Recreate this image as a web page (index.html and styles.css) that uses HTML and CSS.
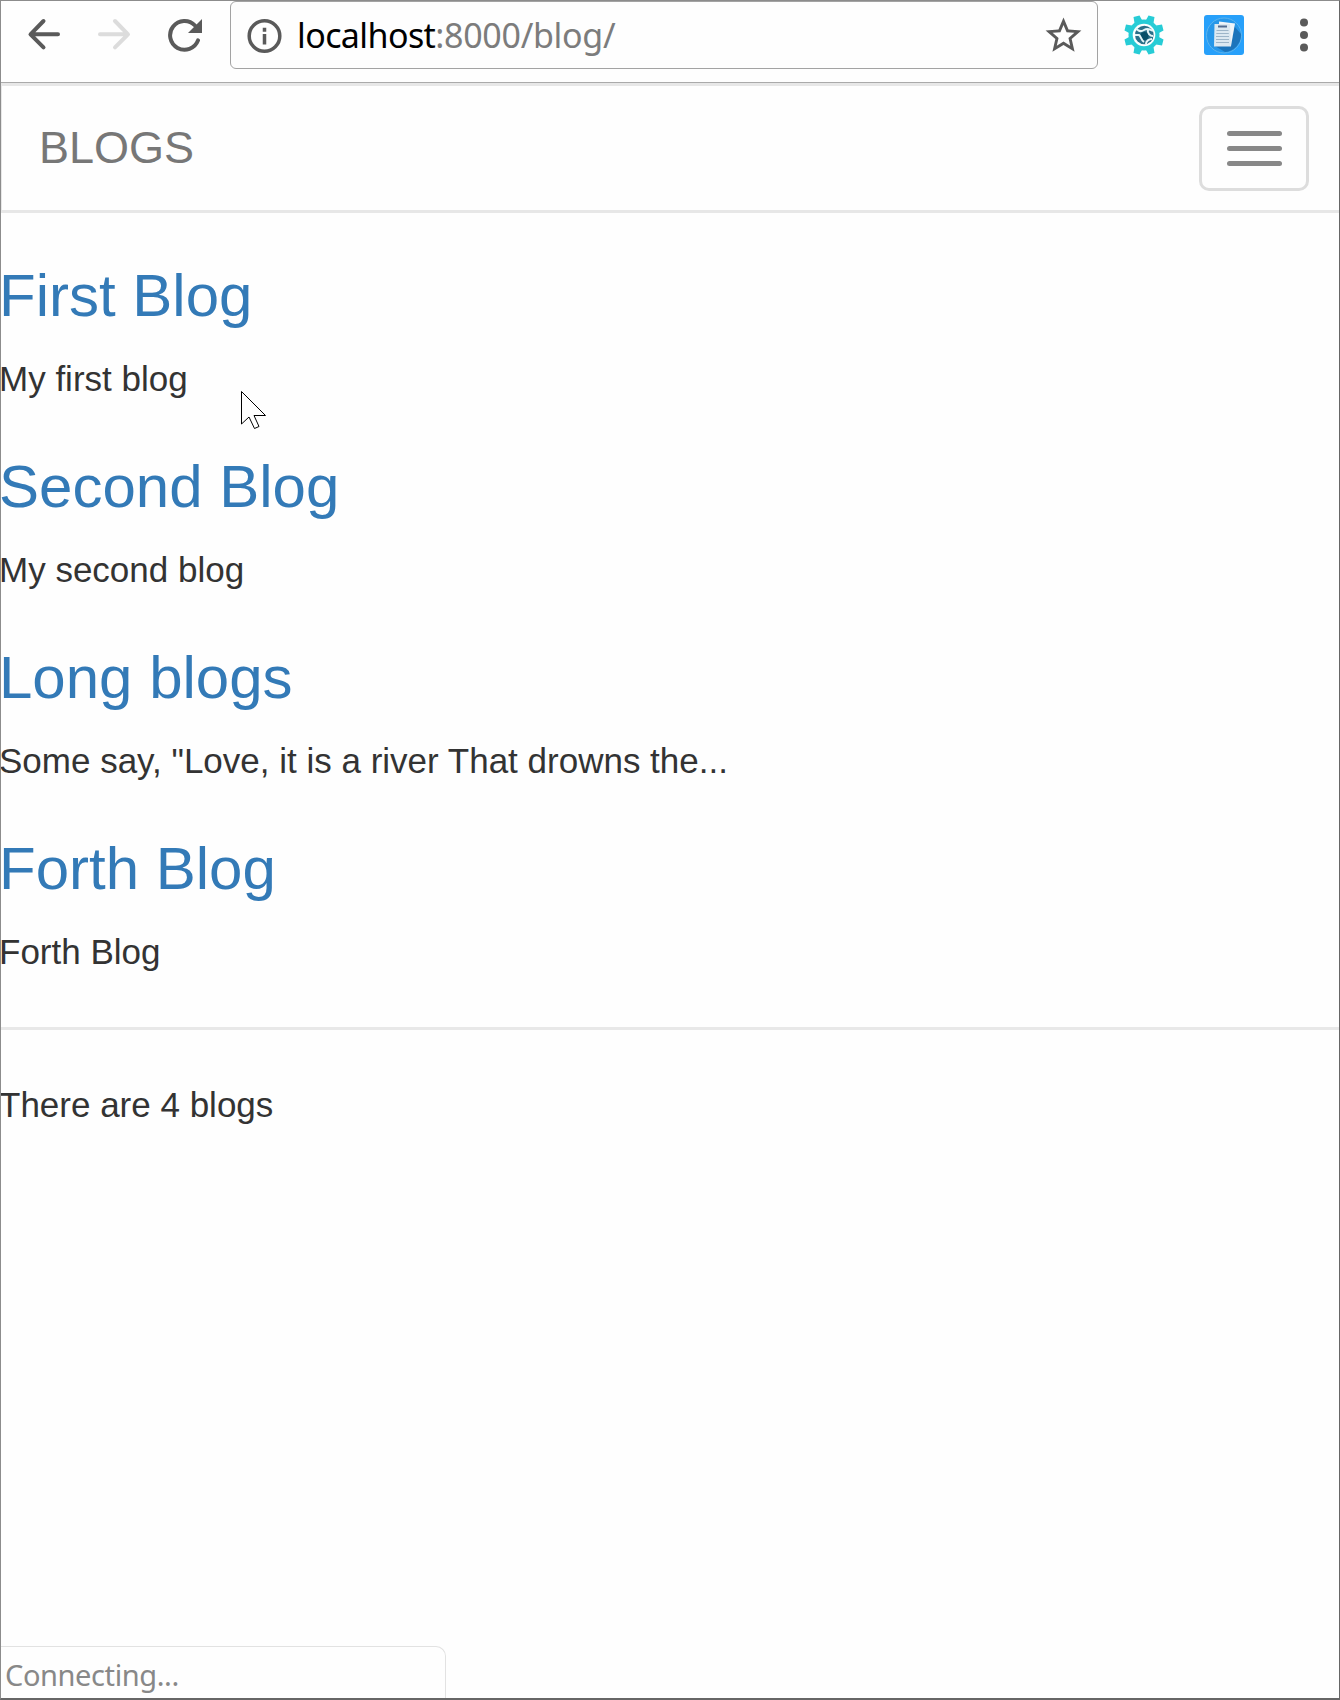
FILE: index.html
```
<!DOCTYPE html>
<html lang="en">
<head>
<meta charset="utf-8">
<title>Blogs</title>
<link rel="stylesheet" href="styles.css">
</head>
<body>
<div class="window">
  <header class="toolbar">
    <svg class="nav-icon" viewBox="0 0 34 34"><path d="M31 17.300H4M16.500 4 3.500 17.300l13 13"/></svg>
    <svg class="nav-icon disabled" viewBox="0 0 34 34"><path d="M3 17.300h27M18 4l13 13.300-13 13"/></svg>
    <svg class="reload" viewBox="0 0 36 34"><path class="arc" d="M28 7.500A14.400 14.400 0 1 0 31 22.400"/><path d="M35 1v14H21z" fill="#5a5a5a"/></svg>
    <div class="omnibox">
      <svg class="info" viewBox="0 0 36 36"><circle cx="17.500" cy="18" r="15.300"/><path d="M17.500 16v10.500M17.500 9.800v3.900"/></svg>
      <div class="url">localhost<span class="path">:8000/blog/</span></div>
      <svg class="star" viewBox="0 0 24 24"><path fill="#5a5a5a" d="M22 9.240l-7.190-.620L12 2 9.190 8.630 2 9.240l5.460 4.730L5.820 21 12 17.270 18.180 21l-1.630-7.030L22 9.240zM12 15.400l-3.760 2.270 1-4.280-3.320-2.880 4.380-.380L12 6.100l1.710 4.040 4.380.380-3.320 2.880 1 4.280L12 15.400z"/></svg>
    </div>
    <svg class="ext" viewBox="0 0 40 40">
      <g fill="#27ccd6">
        <circle cx="20" cy="20" r="15.500"/>
        <g id="teeth"><path d="M10.500 8 9.500 2 15.500 .500l3 5.500zM21.500 6l3-5.500 6 1.500-1 6z"/><path d="M10.500 32l-1 6 6 1.500 3-5.500zM21.500 34l3 5.500 6-1.500-1-6z"/></g>
        <use href="#teeth" transform="rotate(90 20 20)"/>
      </g>
      <circle cx="20" cy="20" r="11.300" fill="#fff"/>
      <circle cx="20.300" cy="20" r="9.300" fill="#2a6f88"/>
      <circle cx="20.500" cy="21" r="4" fill="#074f68"/>
      <path d="M12 13c2 3 5 4 8 2s6-1 9 1M11 20h4c2 1 2 5 5 7M24 15c-1 3 2 6 5 6M22 29c0-3 3-5 6-5" fill="none" stroke="#e6f5f7" stroke-width="2"/>
    </svg>
    <svg class="ext docs" viewBox="0 0 40 40">
      <rect width="40" height="40" rx="3" fill="#27a0fa"/>
      <circle cx="20" cy="20.500" r="17.500" fill="#2797e9" stroke="#5cb4ee"/>
      <path d="M30 11 37 19a17.500 17.500 0 0 1-16 18l-10-6z" fill="#1c74bb"/>
      <path d="m15 6.500 16 2L27 31l-12-1z" fill="#f0f5f9"/>
      <path d="M10.500 9H26l1 22.500H10z" fill="#dce8f1"/>
      <path d="M14 11.500h9" stroke="#536c91" stroke-width="2"/>
      <path d="M12.500 15.500h12M12.300 18.500h12.500M12 21.500h13M12 24.500h13M12 27.500h13" stroke="#9db5c9"/>
    </svg>
    <svg class="menu" viewBox="0 0 8 34"><circle cx="4" cy="4.500" r="4"/><circle cx="4" cy="17" r="4"/><circle cx="4" cy="29.500" r="4"/></svg>
  </header>
  <nav class="navbar">
    <a class="brand">BLOGS</a>
    <button class="toggle" aria-label="Menu"><span></span><span></span><span></span></button>
  </nav>
  <main class="content">
    <h3>First Blog</h3>
    <p>My first blog</p>
    <h3>Second Blog</h3>
    <p>My second blog</p>
    <h3>Long blogs</h3>
    <p>Some say, "Love, it is a river That drowns the...</p>
    <h3>Forth Blog</h3>
    <p>Forth Blog</p>
    <hr>
    <p>There are 4 blogs</p>
  </main>
  <div class="status">Connecting...</div>
</div>
<svg class="cursor" viewBox="0 0 26 40"><path d="M.5.500v32.500l7.500-7 5.500 11.500 4.500-2-5-11H24.500z"/></svg>
</body>
</html>
```
FILE: styles.css
```
* { box-sizing: border-box; }
body { margin: 0; background: #fefefe; }
svg { display: block; flex: none; }
.window {
  height: 1700px;
  display: flex;
  flex-direction: column;
  border: 1px solid #8c8c8c;
  border-right-color: #666;
  border-bottom: 2px solid #666;
  overflow: hidden;
  font-family: "Liberation Sans", Arial, sans-serif;
}
.toolbar {
  height: 82px;
  flex: none;
  display: flex;
  align-items: flex-start;
  padding-left: 26px;
  border-bottom: 1px solid #aaa;
}
.nav-icon {
  width: 34px;
  height: 34px;
  margin: 16px 36px 0 0;
  fill: none;
  stroke: #5a5a5a;
  stroke-width: 4;
  stroke-linecap: round;
  stroke-linejoin: round;
}
.disabled { stroke: #dcdcdc; }
.reload { width: 36px; height: 34px; margin-top: 17px; }
.arc { fill: none; stroke: #5a5a5a; stroke-width: 4; stroke-linecap: round; }
.omnibox {
  width: 868px;
  height: 68px;
  margin-left: 27px;
  display: flex;
  align-items: flex-start;
  border: 1px solid #a3a3a3;
  border-radius: 6px;
}
.info { width: 36px; height: 36px; margin: 16px 0 0 16px; fill: none; stroke: #5a5a5a; stroke-width: 3.5; }
.url {
  flex: 1;
  margin-left: 14px;
  font: 34px/66px "Noto Sans", sans-serif;
  letter-spacing: -0.6px;
  color: #000;
}
.path { color: #7c7c7c; letter-spacing: -0.3px; }
.star { width: 43px; height: 43px; margin: 12px 12px 0 0; }
.ext { width: 40px; height: 40px; margin: 14px 0 0 26px; }
.docs { margin-left: 40px; }
.menu { width: 8px; height: 34px; margin: 17px 0 0 56px; fill: #5a5a5a; }
.navbar {
  height: 130px;
  flex: none;
  display: flex;
  align-items: center;
  justify-content: space-between;
  padding: 0 30px 0 37px;
  border: solid #e7e7e7;
  border-width: 3px 0 3px 1px;
}
.brand { font-size: 45px; line-height: 50px; color: #777; }
.toggle {
  width: 110px;
  height: 85px;
  display: flex;
  flex-direction: column;
  align-items: center;
  justify-content: center;
  gap: 10px;
  padding: 0;
  background: none;
  border: 3px solid #ddd;
  border-radius: 10px;
}
.toggle span { width: 55px; height: 5px; border-radius: 2.5px; background: #888; }
.content { flex: 1; padding-top: 50px; }
h3 {
  margin: 50px 0 25px -2px;
  font-size: 60px;
  font-weight: 400;
  line-height: 66px;
  color: #337ab7;
}
h3:first-child { margin-top: 0; }
p { margin: 0 0 25px -2px; font-size: 35px; line-height: 50px; color: #333; }
hr { margin: 50px 0; border: 0; border-top: 3px solid #e8e8e8; }
.status {
  width: 445px;
  height: 52px;
  flex: none;
  padding-left: 4px;
  border: solid #e2e2e2;
  border-width: 1px 1px 0 0;
  border-radius: 0 10px 0 0;
  font: 29px/56px "Noto Sans", sans-serif;
  letter-spacing: -0.4px;
  color: #888;
}
.cursor {
  position: absolute;
  left: 241px;
  top: 391px;
  width: 26px;
  height: 40px;
  fill: #fff;
  stroke: #000;
}
```
